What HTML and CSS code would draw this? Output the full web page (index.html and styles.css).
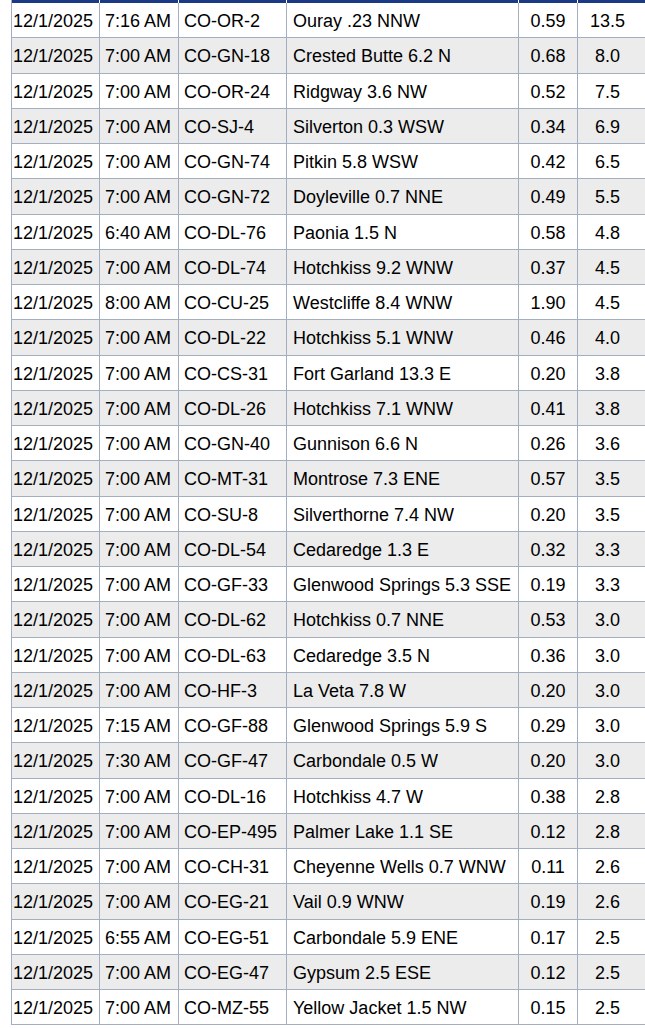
FILE: index.html
```html
<!DOCTYPE html>
<html>
<head>
<meta charset="utf-8">
<link rel="stylesheet" href="styles.css">
</head>
<body>
<table class="obs">
<colgroup>
<col class="c-date"><col class="c-time"><col class="c-id"><col class="c-name"><col class="c-precip"><col class="c-snow">
</colgroup>
<thead>
<tr class="strip"><th></th><th></th><th></th><th></th><th></th><th></th></tr>
</thead>
<tbody>
<tr><td>12/1/2025</td><td>7:16 AM</td><td>CO-OR-2</td><td>Ouray .23 NNW</td><td>0.59</td><td>13.5</td></tr>
<tr><td>12/1/2025</td><td>7:00 AM</td><td>CO-GN-18</td><td>Crested Butte 6.2 N</td><td>0.68</td><td>8.0</td></tr>
<tr><td>12/1/2025</td><td>7:00 AM</td><td>CO-OR-24</td><td>Ridgway 3.6 NW</td><td>0.52</td><td>7.5</td></tr>
<tr><td>12/1/2025</td><td>7:00 AM</td><td>CO-SJ-4</td><td>Silverton 0.3 WSW</td><td>0.34</td><td>6.9</td></tr>
<tr><td>12/1/2025</td><td>7:00 AM</td><td>CO-GN-74</td><td>Pitkin 5.8 WSW</td><td>0.42</td><td>6.5</td></tr>
<tr><td>12/1/2025</td><td>7:00 AM</td><td>CO-GN-72</td><td>Doyleville 0.7 NNE</td><td>0.49</td><td>5.5</td></tr>
<tr><td>12/1/2025</td><td>6:40 AM</td><td>CO-DL-76</td><td>Paonia 1.5 N</td><td>0.58</td><td>4.8</td></tr>
<tr><td>12/1/2025</td><td>7:00 AM</td><td>CO-DL-74</td><td>Hotchkiss 9.2 WNW</td><td>0.37</td><td>4.5</td></tr>
<tr><td>12/1/2025</td><td>8:00 AM</td><td>CO-CU-25</td><td>Westcliffe 8.4 WNW</td><td>1.90</td><td>4.5</td></tr>
<tr><td>12/1/2025</td><td>7:00 AM</td><td>CO-DL-22</td><td>Hotchkiss 5.1 WNW</td><td>0.46</td><td>4.0</td></tr>
<tr><td>12/1/2025</td><td>7:00 AM</td><td>CO-CS-31</td><td>Fort Garland 13.3 E</td><td>0.20</td><td>3.8</td></tr>
<tr><td>12/1/2025</td><td>7:00 AM</td><td>CO-DL-26</td><td>Hotchkiss 7.1 WNW</td><td>0.41</td><td>3.8</td></tr>
<tr><td>12/1/2025</td><td>7:00 AM</td><td>CO-GN-40</td><td>Gunnison 6.6 N</td><td>0.26</td><td>3.6</td></tr>
<tr><td>12/1/2025</td><td>7:00 AM</td><td>CO-MT-31</td><td>Montrose 7.3 ENE</td><td>0.57</td><td>3.5</td></tr>
<tr><td>12/1/2025</td><td>7:00 AM</td><td>CO-SU-8</td><td>Silverthorne 7.4 NW</td><td>0.20</td><td>3.5</td></tr>
<tr><td>12/1/2025</td><td>7:00 AM</td><td>CO-DL-54</td><td>Cedaredge 1.3 E</td><td>0.32</td><td>3.3</td></tr>
<tr><td>12/1/2025</td><td>7:00 AM</td><td>CO-GF-33</td><td>Glenwood Springs 5.3 SSE</td><td>0.19</td><td>3.3</td></tr>
<tr><td>12/1/2025</td><td>7:00 AM</td><td>CO-DL-62</td><td>Hotchkiss 0.7 NNE</td><td>0.53</td><td>3.0</td></tr>
<tr><td>12/1/2025</td><td>7:00 AM</td><td>CO-DL-63</td><td>Cedaredge 3.5 N</td><td>0.36</td><td>3.0</td></tr>
<tr><td>12/1/2025</td><td>7:00 AM</td><td>CO-HF-3</td><td>La Veta 7.8 W</td><td>0.20</td><td>3.0</td></tr>
<tr><td>12/1/2025</td><td>7:15 AM</td><td>CO-GF-88</td><td>Glenwood Springs 5.9 S</td><td>0.29</td><td>3.0</td></tr>
<tr><td>12/1/2025</td><td>7:30 AM</td><td>CO-GF-47</td><td>Carbondale 0.5 W</td><td>0.20</td><td>3.0</td></tr>
<tr><td>12/1/2025</td><td>7:00 AM</td><td>CO-DL-16</td><td>Hotchkiss 4.7 W</td><td>0.38</td><td>2.8</td></tr>
<tr><td>12/1/2025</td><td>7:00 AM</td><td>CO-EP-495</td><td>Palmer Lake 1.1 SE</td><td>0.12</td><td>2.8</td></tr>
<tr><td>12/1/2025</td><td>7:00 AM</td><td>CO-CH-31</td><td>Cheyenne Wells 0.7 WNW</td><td>0.11</td><td>2.6</td></tr>
<tr><td>12/1/2025</td><td>7:00 AM</td><td>CO-EG-21</td><td>Vail 0.9 WNW</td><td>0.19</td><td>2.6</td></tr>
<tr><td>12/1/2025</td><td>6:55 AM</td><td>CO-EG-51</td><td>Carbondale 5.9 ENE</td><td>0.17</td><td>2.5</td></tr>
<tr><td>12/1/2025</td><td>7:00 AM</td><td>CO-EG-47</td><td>Gypsum 2.5 ESE</td><td>0.12</td><td>2.5</td></tr>
<tr><td>12/1/2025</td><td>7:00 AM</td><td>CO-MZ-55</td><td>Yellow Jacket 1.5 NW</td><td>0.15</td><td>2.5</td></tr>
</tbody>
</table>
</body>
</html>
```

FILE: styles.css
```css
html, body {
  margin: 0;
  padding: 0;
  background: #ffffff;
  overflow: hidden;
}

.obs {
  margin-left: 11px;
  border-collapse: separate;
  border-spacing: 0;
  table-layout: fixed;
  width: 634px;
  border-left: 1px solid #a3aec0;
  font-family: "Liberation Sans", Arial, sans-serif;
  font-size: 18px;
  color: #000000;
}

.c-date { width: 88px; }
.c-time { width: 79px; }
.c-id { width: 108px; }
.c-name { width: 232px; }
.c-precip { width: 59px; }
.c-snow { width: 67px; }

.strip th {
  height: 3px;
  padding: 0;
  background: #1b3a86;
  border-right: 1px solid #ffffff;
  box-sizing: border-box;
}

.strip th:last-child {
  border-right: none;
}

.obs td {
  box-sizing: border-box;
  padding: 8px 5px 6px;
  line-height: 20.25px;
  white-space: nowrap;
  overflow: hidden;
  border-right: 1px solid #a3aec0;
  border-bottom: 1px solid #a3aec0;
  text-align: left;
}

.obs tbody tr:nth-child(even) td {
  background: #ececec;
}

.obs td:nth-child(1) {
  padding-left: 1px;
  padding-right: 0;
}

.obs td:nth-child(4) {
  padding-left: 6px;
}

.obs td:nth-child(5) {
  text-align: center;
  padding-left: 0;
  padding-right: 0;
}

.obs td:nth-child(6) {
  text-align: center;
  padding-left: 0;
  padding-right: 8px;
  border-right: none;
}
```
